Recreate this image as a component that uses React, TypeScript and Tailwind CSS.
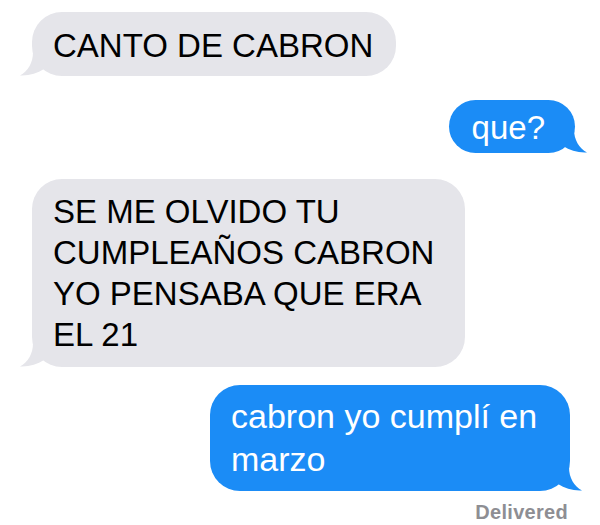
import React from "react";

const FONT = { fontFamily: '"Liberation Sans", Arial, sans-serif' };

function TailLeft() {
  return (
    <svg
      className="absolute -left-[12px] bottom-0"
      width="26"
      height="24"
      viewBox="0 0 26 24"
    >
      <path
        d="M13 0 C13 11 8 19 0 23.5 C9 24 17 21.5 24 17 L24 0 Z"
        fill="#e5e5ea"
      />
    </svg>
  );
}

function TailRight() {
  return (
    <svg
      className="absolute -right-[12px] bottom-0"
      width="26"
      height="24"
      viewBox="0 0 26 24"
    >
      <path
        d="M13 0 C13 11 18 19 26 23.5 C17 24 9 21.5 2 17 L2 0 Z"
        fill="#1b8cf6"
      />
    </svg>
  );
}

export default function App() {
  return (
    <div className="flex h-[525px] w-[600px] flex-col bg-white" style={FONT}>
      {/* received */}
      <div className="relative ml-[32px] mt-[12px] w-fit self-start whitespace-nowrap rounded-[30px] bg-[#e5e5ea] pl-[21px] pr-[23px] pt-[13px] pb-[10px] text-[33px] leading-[41px] text-black">
        <TailLeft />
        <span className="relative">CANTO DE CABRON</span>
      </div>

      {/* sent */}
      <div className="relative mr-[25px] mt-[24px] w-fit self-end whitespace-nowrap rounded-[28px] bg-[#1b8cf6] pl-[23px] pr-[30px] pt-[7px] pb-[5px] text-[33px] leading-[41px] text-white">
        <TailRight />
        <span className="relative">que?</span>
      </div>

      <div className="relative ml-[32px] mt-[26px] w-[433px] self-start rounded-[30px] bg-[#e5e5ea] pl-[21px] pr-[28px] pt-[12px] pb-[12px] text-[33px] leading-[41px] text-black">
        <TailLeft />
        <p className="relative">
          SE ME OLVIDO TU CUMPLEAÑOS CABRON YO PENSABA QUE ERA EL 21
        </p>
      </div>

      <div className="relative mr-[30px] mt-[18px] w-[360px] self-end rounded-[30px] bg-[#1b8cf6] pl-[21px] pr-[30px] pt-[10px] pb-[10px] text-[34px] leading-[43px] text-white">
        <TailRight />
        <p className="relative">cabron yo cumplí en marzo</p>
      </div>

      <div className="mr-[32px] mt-[9px] self-end text-[20px] font-semibold leading-[24px] tracking-[0.3px] text-[#8e8e93]">
        Delivered
      </div>
    </div>
  );
}
